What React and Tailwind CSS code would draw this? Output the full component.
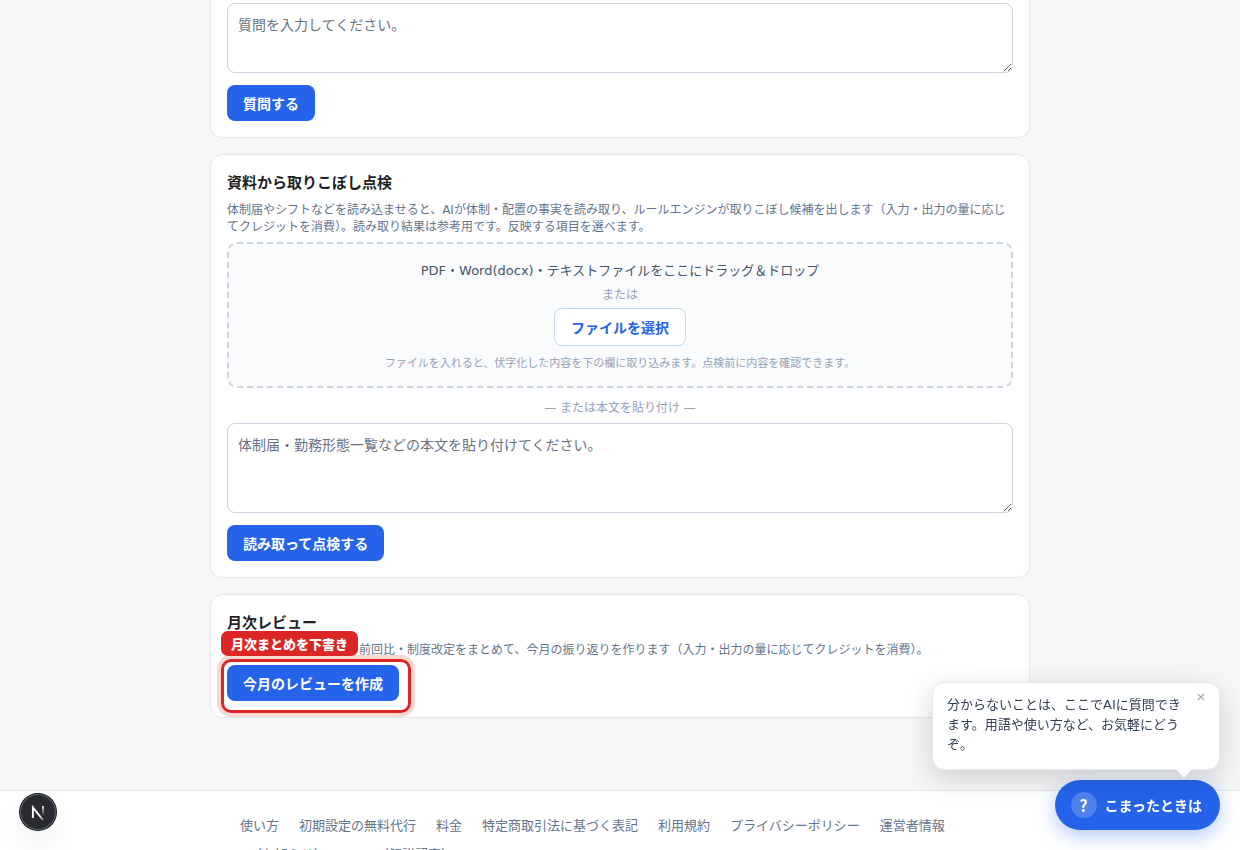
import React from "react";

const footerLinks = [
  "使い方",
  "初期設定の無料代行",
  "料金",
  "特定商取引法に基づく表記",
  "利用規約",
  "プライバシーポリシー",
  "運営者情報",
  "X（お知らせ）",
  "note（解説記事）",
];

const PrimaryButton = ({ children }) => (
  <button
    type="button"
    className="block h-9 rounded-lg bg-[#2563eb] px-4 pt-[2px] text-sm font-bold text-white"
  >
    {children}
  </button>
);

const CardHeader = ({ title, children }) => (
  <>
    <h2 className="mb-[7px] text-[15px] leading-6 font-bold text-[#1f1f23]">
      {title}
    </h2>
    <p className="mb-[6px] text-xs leading-[17px] text-[#64748b]">{children}</p>
  </>
);

const textareaClass =
  "block w-full resize rounded-lg border border-[#cbd5e1] bg-white p-[10px] text-sm leading-[22px] text-slate-600 placeholder:text-gray-500";

const AskCard = () => (
  <section className="rounded-b-xl border border-t-0 border-gray-200 bg-white px-4 pt-[3px] pb-4">
    <label htmlFor="question" className="sr-only">
      質問
    </label>
    <textarea
      id="question"
      className={`${textareaClass} mb-3 h-[70px]`}
      placeholder="質問を入力してください。"
    />
    <PrimaryButton>質問する</PrimaryButton>
  </section>
);

const DocumentCard = () => (
  <section className="rounded-xl border border-gray-200 bg-white p-4">
    <CardHeader title="資料から取りこぼし点検">
      体制届やシフトなどを読み込ませると、AIが体制・配置の事実を読み取り、ルールエンジンが取りこぼし候補を出します（入力・出力の量に応じてクレジットを消費）。読み取り結果は参考用です。反映する項目を選べます。
    </CardHeader>

    <div className="flex flex-col items-center rounded-[10px] border-2 border-dashed border-[#cbd5e1] bg-[#fafbfd] px-4 pt-4 pb-[14px] text-center">
      <p className="mb-[6px] text-[13px] leading-[21px] text-[#475569]">
        PDF・Word(docx)・テキストファイルをここにドラッグ＆ドロップ
      </p>
      <p className="mb-1 text-xs leading-[17px] text-[#94a3b8]">または</p>
      <button
        type="button"
        className="mb-[10px] h-[38px] rounded-lg border border-[#bfdbfe] bg-white px-4 pt-[2px] text-sm font-bold text-[#2563eb]"
      >
        ファイルを選択
      </button>
      <p className="text-[11px] leading-4 text-[#94a3b8]">
        ファイルを入れると、伏字化した内容を下の欄に取り込みます。点検前に内容を確認できます。
      </p>
    </div>

    <label
      htmlFor="document-text"
      className="mt-3 mb-[6px] block text-center text-xs leading-[17px] text-[#94a3b8]"
    >
      — または本文を貼り付け —
    </label>
    <textarea
      id="document-text"
      className={`${textareaClass} mb-3 h-[90px]`}
      placeholder="体制届・勤務形態一覧などの本文を貼り付けてください。"
    />
    <PrimaryButton>読み取って点検する</PrimaryButton>
  </section>
);

const ReviewCard = () => (
  <section className="rounded-xl border border-gray-200 bg-white p-4">
    <CardHeader title="月次レビュー">
      今月の点検結果・要件・前回比・制度改定をまとめて、今月の振り返りを作ります（入力・出力の量に応じてクレジットを消費）。
    </CardHeader>
    <div className="relative w-fit">
      <PrimaryButton>今月のレビューを作成</PrimaryButton>
      {/* Guide highlight around the button */}
      <div className="pointer-events-none absolute -top-[6px] -right-3 -bottom-3 -left-[6px] rounded-[10px] border-3 border-[#dc2626] shadow-[0_0_0_4px_rgba(220,60,30,0.2)]" />
      <span className="absolute -top-[34px] -left-[6px] rounded-[7px] bg-[#dc2626] px-[10px] pt-[2px] text-[13px] leading-[23px] font-extrabold whitespace-nowrap text-white">
        月次まとめを下書き
      </span>
    </div>
  </section>
);

const Footer = () => (
  <footer className="mt-[72px] border-t border-gray-200 bg-white px-5 pt-[25px] pb-8">
    <nav className="mx-auto flex max-w-[760px] flex-wrap gap-x-5 gap-y-[10px] text-[13px] leading-[19px] text-[#64748b]">
      {footerLinks.map((label) => (
        <a key={label} href="#">
          {label}
        </a>
      ))}
    </nav>
  </footer>
);

const HelpWidget = () => (
  <div className="fixed right-5 bottom-5 flex flex-col items-end gap-[10px]">
    <div className="relative w-72 rounded-xl border border-gray-200 bg-white pt-3 pr-[34px] pb-[14px] pl-[14px] text-[13px] leading-5 text-[#334155] shadow-[0_8px_28px_rgba(15,23,42,0.18)]">
      分からないことは、ここでAIに質問できます。用語や使い方など、お気軽にどうぞ。
      <button
        type="button"
        aria-label="閉じる"
        className="absolute top-1 right-2 size-5 text-[13px] leading-5 text-[#94a3b8]"
      >
        ×
      </button>
      <span className="absolute right-[29px] -bottom-[6px] size-3 rotate-45 bg-white" />
    </div>
    <button
      type="button"
      className="flex h-[50px] items-center gap-2 rounded-full bg-[#2563eb] pr-[18px] pl-4 text-sm font-bold text-white shadow-[0_6px_20px_rgba(37,99,235,0.35)]"
    >
      <span className="flex size-[26px] items-center justify-center rounded-full bg-white/20 font-['Noto_Sans_CJK_JP',sans-serif] text-base leading-[26px]">
        ?
      </span>
      <span className="pt-[2px]">こまったときは</span>
    </button>
  </div>
);

const DevBadge = () => (
  <button
    type="button"
    aria-label="Next.js"
    className="fixed bottom-5 left-5 size-9 rounded-full bg-[#2a2b31] shadow-[0_0_0_1px_#171717,inset_0_0_0_1px_#5b6474,0_16px_32px_-8px_rgba(0,0,0,0.2)]"
  >
    <svg viewBox="0 0 36 36" className="size-9" fill="none" aria-hidden="true">
      <defs>
        <linearGradient id="diag" x1="17" y1="17" x2="24" y2="26" gradientUnits="userSpaceOnUse">
          <stop stopColor="#fff" />
          <stop offset="0.5" stopColor="#fff" />
          <stop offset="1" stopColor="#fff" stopOpacity="0.3" />
        </linearGradient>
        <linearGradient id="stem" x1="23" y1="12" x2="23" y2="22" gradientUnits="userSpaceOnUse">
          <stop stopColor="#fff" />
          <stop offset="1" stopColor="#fff" stopOpacity="0" />
        </linearGradient>
      </defs>
      <path d="M12.9 24V13.4L23 26" stroke="url(#diag)" strokeWidth="1.9" />
      <path d="M23 12v10" stroke="url(#stem)" strokeWidth="1.7" />
    </svg>
  </button>
);

const App = () => {
  return (
    <div className="h-screen overflow-hidden bg-[#f7f7f7] font-['DejaVu_Sans','Noto_Sans_CJK_JP',sans-serif]">
      <main className="mx-auto flex max-w-[820px] flex-col gap-4">
        <AskCard />
        <DocumentCard />
        <ReviewCard />
      </main>
      <Footer />
      <HelpWidget />
      <DevBadge />
    </div>
  );
};

export default App;
